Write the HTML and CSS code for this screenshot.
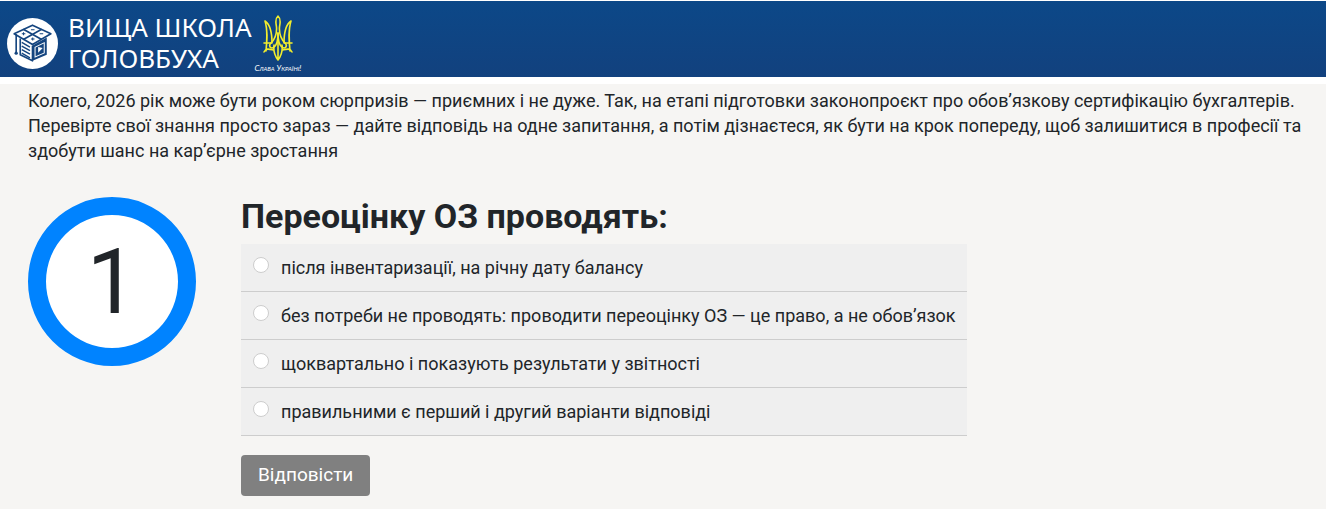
FILE: index.html
```html
<!doctype html>
<html lang="uk">
	<head>
		<meta charset="UTF-8">
		<title>Вища школа Головбуха</title>
		<link rel="stylesheet" href="styles.css">
	</head>
	<body>
		<header class="header">
			<a class="logo" href="#">
				<svg class="logo-icon" viewBox="0 0 50 50" aria-hidden="true">
					<circle cx="25" cy="25" r="25" fill="#fff"/>
					<g fill="none" stroke="#15457f" stroke-width="1.600" stroke-linejoin="round">
						<path d="M25 7 L43 15.500 L25 26 L7 15.500 Z"/>
						<path d="M16 11 L34 21 M34 11 L16 21"/>
						<path d="M13 20 V36 L25 42 V27"/>
						<path d="M9 16 V34"/>
						<path stroke-width="1.400" d="M14.500 24 L22.500 28.500 M14.500 27.500 L22.500 32 M14.500 31 L22.500 35.500 M14.500 34.500 L22.500 39"/>
						<path stroke-width="1" d="M23.500 11.500 H27 M14.500 15.500 H18 M16.200 14 V17 M32 15.500 H35.500 M23.500 20.500 H27 M25.200 19 V22"/>
					</g>
					<path fill="#15457f" d="M25 27 L39 19 V36 L25 42 Z"/>
					<path fill="#fff" d="M27 28.500 L37 23.500 V34.500 L27 39 Z"/>
					<path fill="#15457f" d="M28 29 L36 25 V34 L28 37.500 Z"/>
					<path fill="#fff" d="M30.500 28.500 L35 29.500 L30.500 34 Z"/>
					<circle cx="9" cy="34.500" r="1.600" fill="#15457f"/>
				</svg>
				<span class="logo-text">ВИЩА ШКОЛА<br>ГОЛОВБУХА</span>
			</a>
			<div class="slava">
				<svg class="trident" viewBox="0 0 30 46" aria-hidden="true">
					<g fill="none" stroke="#f3ee2c" stroke-width="1.600" stroke-linejoin="round" stroke-linecap="round">
						<path d="M15 1 C11.500 4 13 8 13.500 12 C14 19 12 24 8 28 C5 31 8 35 11 32 C14 30 15 25 15 18 C15 25 16 30 19 32 C22 35 25 31 22 28 C18 24 16 19 16.500 12 C17 8 18.500 4 15 1 Z"/>
						<path d="M2 6 C5 15 4 25 3 36 M2 6 C8 10 9 18 9 28 M1 28 H9 M1 37 C3 33 6 34 10 35"/>
						<path d="M28 6 C25 15 26 25 27 36 M28 6 C22 10 21 18 21 28 M29 28 H21 M29 37 C27 33 24 34 20 35"/>
						<path d="M11 30 C10 37 12 41 15 45 C18 41 20 37 19 30 M15 18 V44"/>
					</g>
				</svg>
				<span class="slava-text">Слава Україні!</span>
			</div>
		</header>
		<main class="content">
			<p class="intro">Колего, 2026 рік може бути роком сюрпризів — приємних і не дуже. Так, на етапі підготовки законопроєкт про обов’язкову сертифікацію бухгалтерів. Перевірте свої знання просто зараз — дайте відповідь на одне запитання, а потім дізнаєтеся, як бути на крок попереду, щоб залишитися в професії та здобути шанс на кар’єрне зростання</p>
			<div class="question">
				<div class="number">1</div>
				<form class="quiz">
					<h1 class="title">Переоцінку ОЗ проводять:</h1>
					<label class="answer"><input class="radio" type="radio" name="answer" value="1"><span>після інвентаризації, на річну дату балансу</span></label>
					<label class="answer"><input class="radio" type="radio" name="answer" value="2"><span>без потреби не проводять: проводити переоцінку ОЗ — це право, а не обов’язок</span></label>
					<label class="answer"><input class="radio" type="radio" name="answer" value="3"><span>щоквартально і показують результати у звітності</span></label>
					<label class="answer"><input class="radio" type="radio" name="answer" value="4"><span>правильними є перший і другий варіанти відповіді</span></label>
					<button class="submit" type="button">Відповісти</button>
				</form>
			</div>
		</main>
	</body>
</html>
```

FILE: styles.css
```css
*
{
	box-sizing: border-box;
}
body
{
	margin: 0;
	background: #f6f5f3;
	color: #212529;
	font-family: Roboto, sans-serif;
	font-size: 18px;
	line-height: 25px;
}
.header
{
	display: flex;
	align-items: flex-start;
	gap: 3px;
	height: 84px;
	padding: 11px 7px 0;
	background: linear-gradient(#0c4888, #12417e);
	border-top: 1px solid #fff;
	border-bottom: 7px solid #fff;
}
.logo
{
	display: flex;
	align-items: center;
	gap: 10px;
	color: #fff;
	text-decoration: none;
}
.logo-icon
{
	width: 51px;
	height: 51px;
}
.logo-text
{
	font-family: "Noto Sans", sans-serif;
	font-size: 26px;
	line-height: 31px;
}
.slava
{
	display: flex;
	flex-direction: column;
	align-items: center;
	gap: 3px;
	padding-top: 3px;
}
.trident
{
	width: 30px;
	height: 46px;
}
.slava-text
{
	color: #fff;
	font-family: Lato, sans-serif;
	font-size: 8px;
	font-style: italic;
	font-variant: small-caps;
	line-height: 8px;
}
.content
{
	padding: 4px 20px 12px 28px;
}
.intro
{
	margin: 0;
}
.question
{
	display: flex;
	align-items: flex-start;
	gap: 45px;
	margin-top: 34px;
}
.number
{
	display: flex;
	flex: none;
	align-items: center;
	justify-content: center;
	width: 168px;
	height: 169px;
	padding-top: 3px;
	background: #fff;
	border: 18px solid #0083ff;
	border-radius: 50%;
	font-size: 90px;
	line-height: 90px;
}
.title
{
	margin: 0 0 8px;
	font-size: 34px;
	font-weight: 700;
	line-height: 39px;
}
.answer
{
	display: flex;
	align-items: flex-start;
	gap: 12px;
	padding: 11px 11px 11px 12px;
	background: #efefef;
	border-bottom: 1px solid #cdcdcd;
}
.radio
{
	appearance: none;
	flex: none;
	width: 16px;
	height: 16px;
	margin: 2px 0 0;
	background: #fff;
	border: 1px solid #cdcdcd;
	border-radius: 50%;
}
.radio:checked
{
	border: 5px solid #0083ff;
}
.submit
{
	margin-top: 19px;
	padding: 7px 17px 9px;
	background: #808080;
	border: 0;
	border-radius: 4px;
	color: #fff;
	font-family: Roboto, sans-serif;
	font-size: 19px;
	line-height: 25px;
}
```
